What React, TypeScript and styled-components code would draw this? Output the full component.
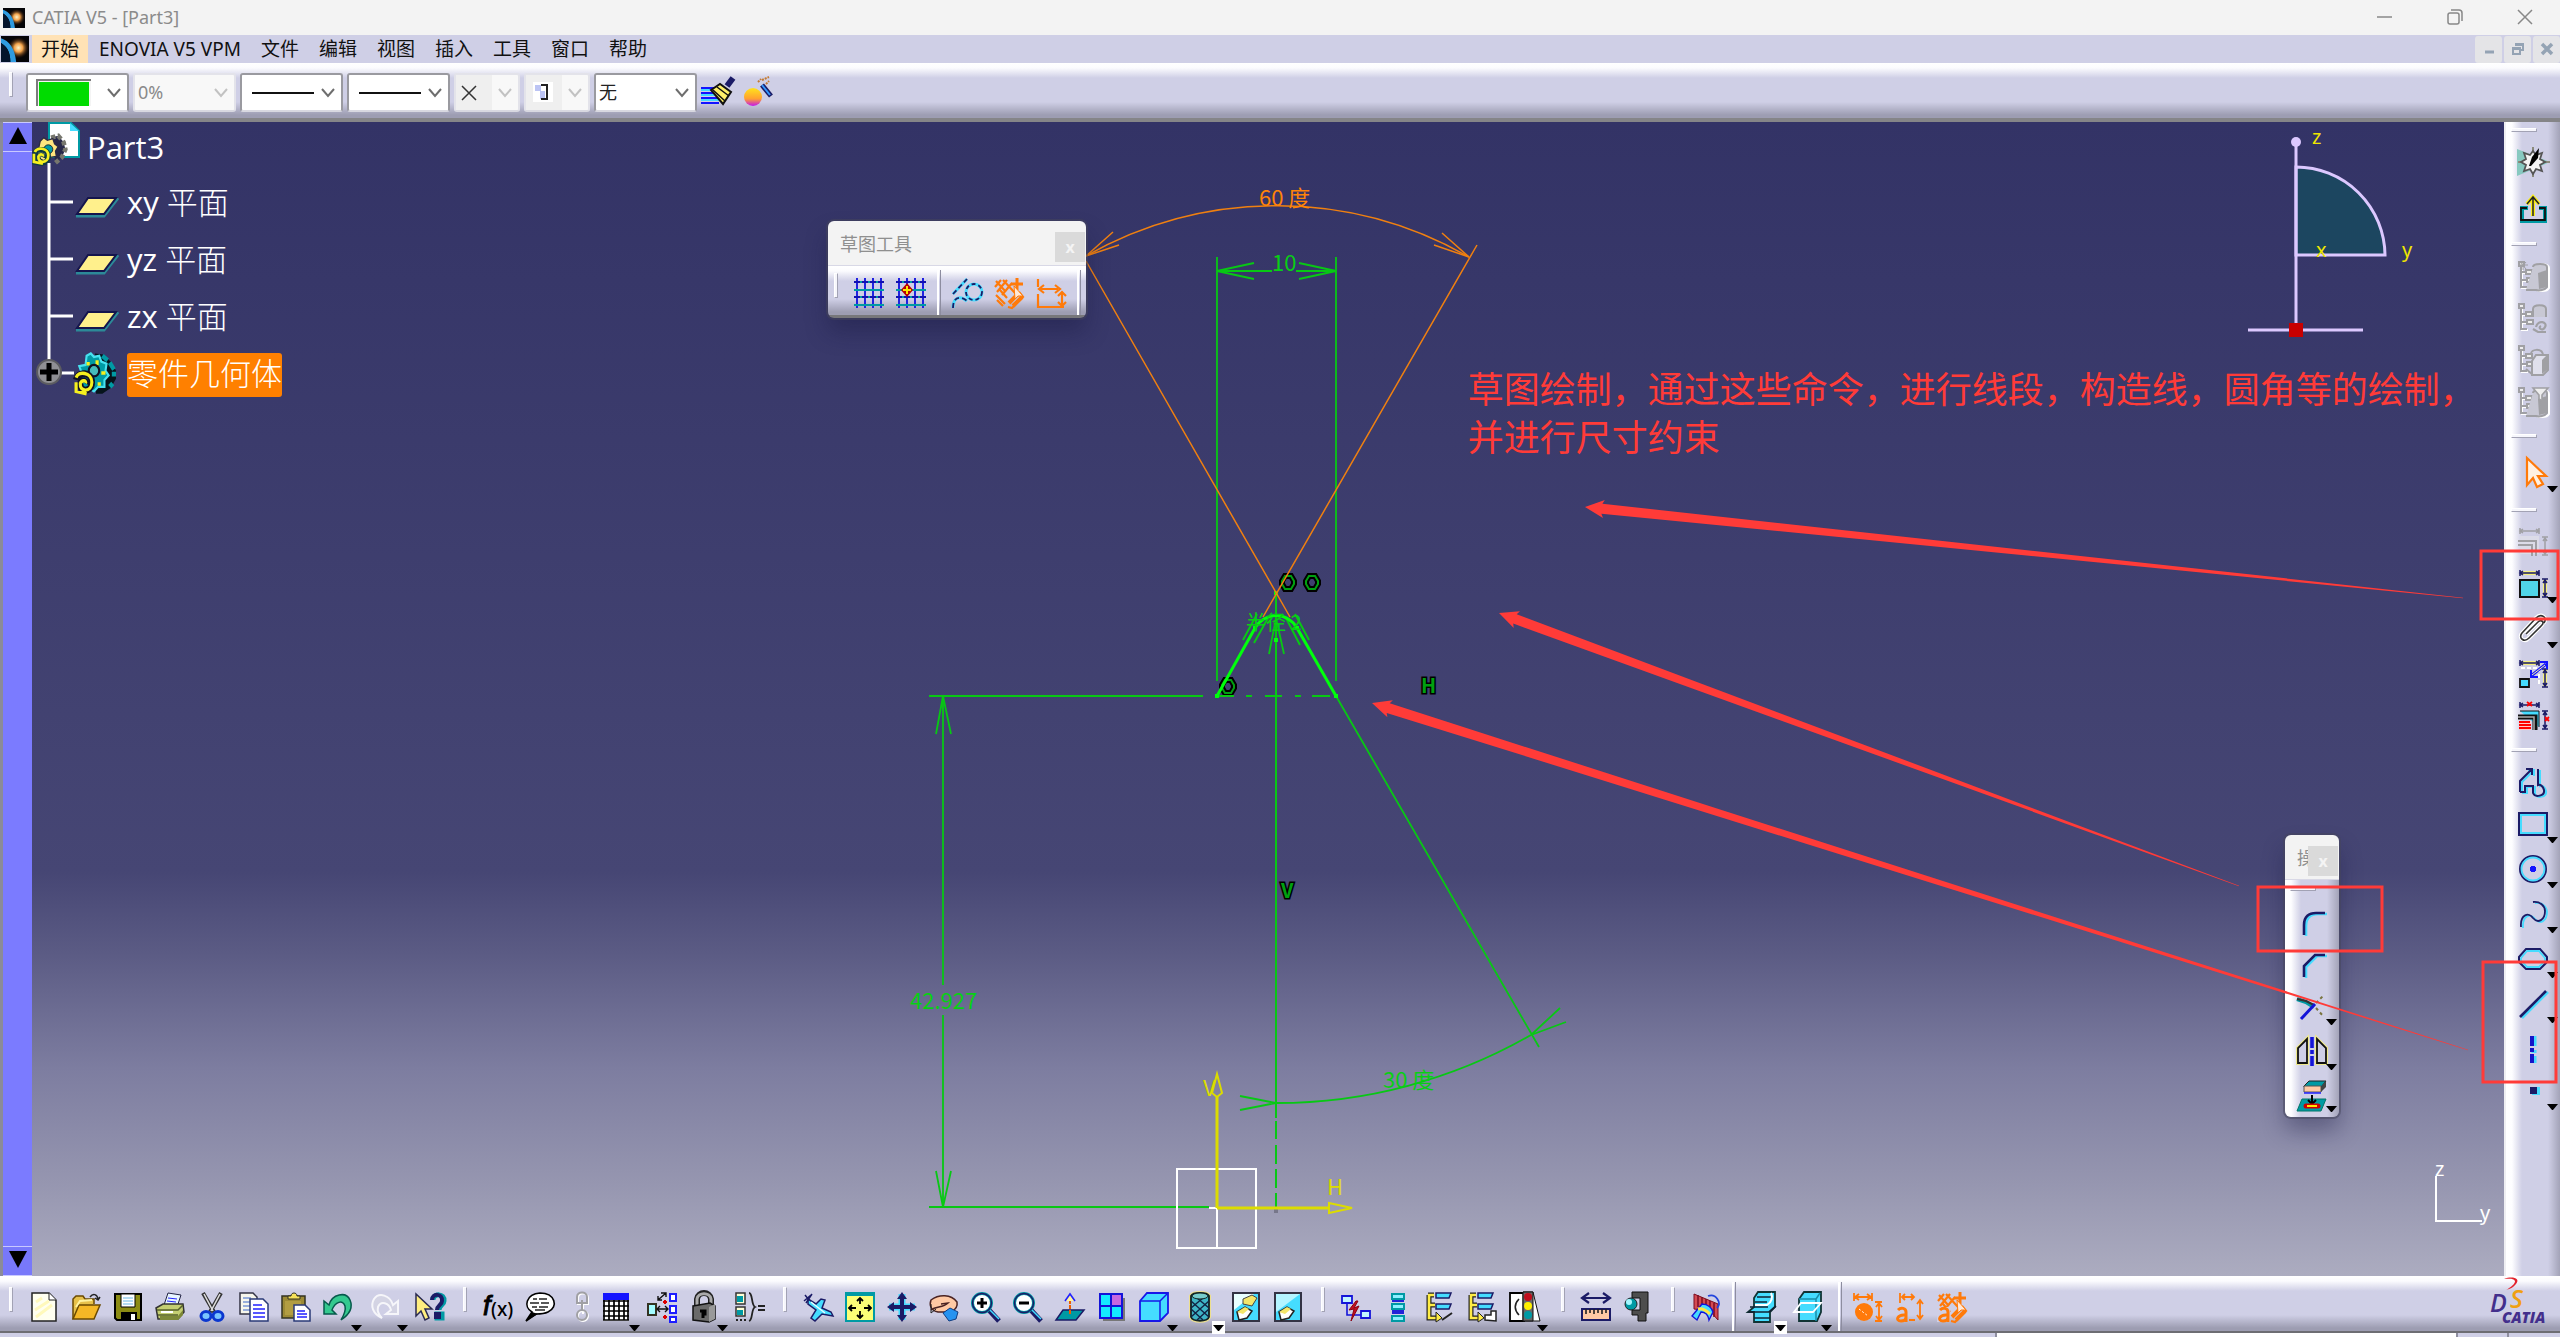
import React from "react";
import styled, { createGlobalStyle, css } from "styled-components";

const UI = `"Noto Sans", "Noto Sans CJK SC", sans-serif`;
const CAD = `"Noto Sans CJK SC", sans-serif`;
const RED = "#ff3b38";
const LAV = "#cfcfe6";

const Global = createGlobalStyle`
  *, *::before, *::after { box-sizing: border-box; }
  body { margin: 0; overflow: hidden; }
  button, select { font-family: inherit; font-size: inherit; color: inherit; }
`;

const barDown = css`
  background: linear-gradient(to bottom, #fff 0, #fbfbfe 5px, ${LAV} 15px, ${LAV} calc(100% - 16px), #9d9db2 calc(100% - 3px), #9d9db2 100%);
`;
const barSide = css`
  background: linear-gradient(to right, #fff 0, #fdfdff 6px, ${LAV} 16px, ${LAV} calc(100% - 12px), #a3a3b8 100%);
`;

const Window = styled.div`
  position: relative;
  display: flex;
  flex-direction: column;
  height: 100vh;
  font-family: ${UI};
  font-size: 18px;
  color: #111;
  background: ${LAV};
`;
const TitleBar = styled.header`
  display: flex;
  align-items: center;
  flex: 0 0 35px;
  padding-left: 3px;
  gap: 7px;
  background: #f3f3f3;
  color: #8b8b8b;
`;
const TitleText = styled.h1`
  flex: 1;
  margin: 0;
  font-size: 18px;
  font-weight: 400;
  line-height: 35px;
`;
const WinButton = styled.button`
  width: 70px;
  height: 32px;
  border: 0;
  padding: 0;
  background: none;
`;
const MenuBar = styled.nav`
  display: flex;
  align-items: center;
  flex: 0 0 28px;
  padding-left: 1px;
  font-size: 19px;
  background: ${LAV};
`;
const MenuList = styled.div`
  display: flex;
  gap: 2px;
  flex: 1;
  margin-left: 3px;
`;
const MenuItem = styled.button<{ $active?: boolean }>`
  height: 28px;
  padding: 0 9px;
  border: 0;
  line-height: 24px;
  white-space: nowrap;
  background: ${(p) => (p.$active ? "#ffe2b5" : "transparent")};
`;
const MdiButtons = styled.div`
  display: flex;
  gap: 2px;
`;
const MdiButton = styled.button`
  width: 27px;
  height: 27px;
  padding: 0;
  border: 0;
  border-radius: 3px;
  background: #e4e4e7;
`;
const Grip = styled.span<{ $vertical?: boolean }>`
  flex: none;
  width: ${(p) => (p.$vertical ? "26px" : "4px")};
  height: ${(p) => (p.$vertical ? "4px" : "25px")};
  border: 1px solid;
  border-color: #fff #a2a2b4 #a2a2b4 #fff;
  background: #f6f6fc;
`;
const PropertyBar = styled.div`
  ${barDown}
  display: flex;
  align-items: center;
  gap: 4px;
  flex: 0 0 59px;
  padding: 4px 0 0 9px;
  border-bottom: 4px solid #858588;
  ${Grip} { margin: 0 9px 16px 0; }
`;
const Combo = styled.label<{ $w: number; $off?: boolean }>`
  position: relative;
  display: flex;
  width: ${(p) => p.$w}px;
  height: 39px;
  border: 2px solid ${(p) => (p.$off ? "#e3e3ea" : "#9a9aa0")};
  border-bottom-color: #d8d8e0;
  border-radius: 3px;
  background: ${(p) => (p.$off ? "#f8f8f8" : "#fff")};
  color: ${(p) => (p.$off ? "#8a8a8a" : "#222")};
`;
const Select = styled.select`
  appearance: none;
  width: 100%;
  border: 0;
  padding: 0 26px 2px 3px;
  background: transparent;
  color: inherit;
  opacity: 1;
`;
const ComboArt = styled.svg`
  position: absolute;
  left: 0;
  top: 0;
  pointer-events: none;
`;
const Caret = styled.svg`
  position: absolute;
  right: 6px;
  top: 13px;
  pointer-events: none;
`;
const Main = styled.main`
  display: flex;
  flex: 1;
  min-height: 0;
`;
const ScrollStrip = styled.div`
  display: flex;
  flex-direction: column;
  justify-content: space-between;
  flex: 0 0 32px;
  border-left: 3px solid #8b8b98;
  background: #7b7bff;
`;
const ScrollButton = styled.button`
  height: 30px;
  padding: 0;
  border: 0;
  border-bottom: 1px solid #c9c9ff;
  border-top: 1px solid #c9c9ff;
  background: #7878fa;
`;
const Viewport = styled.section`
  position: relative;
  flex: 1;
  overflow: hidden;
  background: linear-gradient(to bottom, #333366 0%, #464674 65%, #5b5b84 72%, #7d7da0 82%, #9696b0 92%, #acacc0 100%);
`;
const Drawing = styled.svg`
  position: absolute;
  inset: 0;
  width: 100%;
  height: 100%;
  font-family: ${CAD};
  font-weight: 400;
`;
const Tree = styled.ul`
  position: relative;
  width: max-content;
  margin: 0;
  padding: 0;
  list-style: none;
  font-family: "Open Sans", "Noto Sans CJK SC", sans-serif;
  font-weight: 400;
  font-size: 31px;
  color: #fff;
`;
const TreeRow = styled.li<{ $root?: boolean }>`
  display: flex;
  align-items: center;
  height: ${(p) => (p.$root ? "53px" : "57px")};
`;
const TreeLabel = styled.span<{ $selected?: boolean }>`
  height: 44px;
  line-height: 40px;
  border-radius: 3px;
  background: ${(p) => (p.$selected ? "#ff8000" : "transparent")};
  white-space: nowrap;
`;
const Han = styled.span`
  font-weight: 300;
`;
const Note = styled.p`
  position: absolute;
  left: 58%;
  top: 241px;
  margin: 0;
  padding-left: 2px;
  font-family: ${CAD};
  font-size: 36px;
  line-height: 48px;
  white-space: nowrap;
  color: ${RED};
`;
const Palette = styled.div`
  position: absolute;
  overflow: hidden;
  border-radius: 6px;
  box-shadow: 0 0 0 2px rgba(70, 70, 90, 0.5), 0 14px 22px rgba(20, 20, 60, 0.35);
`;
const SketchPalette = styled(Palette)`
  left: 796px;
  top: 99px;
`;
const OperationPalette = styled(Palette)`
  right: 165px;
  top: 713px;
  width: 54px;
`;
const PaletteTitle = styled.div`
  display: flex;
  justify-content: space-between;
  height: 45px;
  padding: 11px 1px 0 12px;
  line-height: 24px;
  background: #f3f3f3;
  border-bottom: 1px solid #d8d8e6;
  color: #8f8f8f;
  white-space: nowrap;
`;
const PaletteName = styled.span`
  flex: 1;
  min-width: 0;
  overflow: hidden;
`;
const CloseButton = styled.button`
  flex: none;
  width: 30px;
  height: 30px;
  padding: 0;
  border: 0;
  background: #dadada;
  color: #f4f4f4;
  font-weight: 700;
  font-size: 16px;
  line-height: 28px;
`;
const VBar = styled.div`
  ${barSide}
  display: flex;
  flex-direction: column;
`;
const SideBar = styled(VBar)`
  flex: 0 0 56px;
  border-left: 2px solid #eeeef2;
`;
const Group = styled.div<{ $vertical?: boolean; $first?: boolean }>`
  display: flex;
  flex: none;
  flex-direction: ${(p) => (p.$vertical ? "column" : "row")};
  align-items: ${(p) => (p.$vertical ? "stretch" : "center")};
  ${(p) =>
    p.$vertical
      ? css`
          padding-top: ${p.$first ? 6 : 11}px;
          ${Grip} { margin: 0 0 9px 5px; }
        `
      : css`
          padding-left: ${p.$first ? 9 : 12}px;
          ${Grip} { margin: 0 10px 14px 0; }
        `}
`;
const HBar = styled.div`
  ${barDown}
  display: flex;
  align-items: center;
  height: 52px;
  padding-top: 4px;
  border-bottom: 3px solid #77777a;
  ${Group} { padding-left: 6px; }
`;
const OperationTools = styled(VBar)`
  ${Group} { padding-top: 7px; }
  ${Grip} { margin-bottom: 11px; }
`;
const Divider = styled.span`
  align-self: stretch;
  flex: none;
  width: 4px;
  margin: 0 5px;
  border-left: 2px solid #fff;
  border-right: 1px solid #8d8da0;
`;
const Tool = styled.button<{ $size: number; $vertical?: boolean }>`
  position: relative;
  display: flex;
  flex: none;
  padding: 0;
  border: 0;
  background: none;
  ${(p) =>
    p.$vertical
      ? css`
          height: ${p.$size}px;
          width: 54px;
          padding-top: ${p.$size === 50 ? 10 : 6}px;
          justify-content: center;
        `
      : css`
          width: ${p.$size}px;
          height: 42px;
          padding-left: 6px;
          align-items: center;
        `}
`;
const DropMark = styled.svg<{ $vertical?: boolean }>`
  position: absolute;
  right: ${(p) => (p.$vertical ? "1px" : "0")};
  bottom: ${(p) => (p.$vertical ? "2px" : "-6px")};
`;
const BottomBar = styled.footer`
  ${barDown}
  display: flex;
  align-items: center;
  flex: 0 0 57px;
  padding-top: 6px;
  border-bottom: 2px solid #6d6d73;
`;
const Logo = styled.svg`
  margin: -12px 8px 0 auto;
  flex: none;
`;
const StatusBar = styled.div`
  display: flex;
  flex: 0 0 4px;
  background: ${LAV};
`;
const StatusField = styled.span<{ $w: string; $white?: boolean }>`
  width: ${(p) => p.$w};
  border-right: 2px solid #8f8fa0;
  background: ${(p) => (p.$white ? "#fff" : "transparent")};
`;
const Markup = styled.svg`
  position: absolute;
  inset: 0;
  width: 100%;
  height: 100%;
  pointer-events: none;
`;

const N = "#1b1b66";
const C = "#45dcff";
const T = "#009aa4";
const O = "#ff7a0a";
const G = "#a0a0a4";

const duo = (d: string, w = 2) => (
  <g fill="none">
    <path d={d} stroke={C} strokeWidth={w} transform="translate(2 1)" />
    <path d={d} stroke={N} strokeWidth={w} />
  </g>
);
const specTree = (
  <g fill="none" stroke="#fff" strokeWidth="2">
    <path d="M4 5v22h6M4 12h6M4 20h6" />
    <path d="M3 4v22h6M3 11h6M3 19h6" stroke={G} strokeWidth="2" />
    <path d="M1 1h5v4H1zM8 9h6v4H8zM9 17h6v4H9z" fill="#eee" stroke={G} strokeWidth="2" />
  </g>
);
const grayCyl = (
  <g>
    <path d="M17 7c0-5 14-5 14 0v20c-2 4-12 4-14 0z" fill={LAV} stroke="#fff" strokeWidth="2" />
    <path d="M15 6c0-4 14-4 14 0v20c-2 3-8 4-11 3H8" fill="#c8c8d4" stroke={G} strokeWidth="2" />
    <path d="M20 12l9-3v17l-8 2z" fill={G} />
  </g>
);
const dims = (c: string) => (
  <g stroke={c} strokeWidth="1.5" fill="none">
    <path d="M2 1v6M21 1v6M3 4h17M5 2l-3 2 3 2M18 2l3 2-3 2" />
    <path d="M24 10h6M24 28h6M27 11v16M25 14l2-3 2 3M25 24l2 3 2-3" />
  </g>
);
const dimGlow = (
  <g stroke="#f4ee7c" strokeWidth="4" fill="none">
    <path d="M3 4h17M27 11v16" />
  </g>
);
const pencilHatch = (
  <g stroke={O} strokeWidth="2.2" fill="none">
    <path d="M1 9l6-7M3 14L13 2M8 17L18 5M2 3l10 11M9 2l12 13M2 17l9 9M3 22l6 6M13 20l-7-8M25 14l4 5-11 11-4-1" />
    <path d="M23 0v12M17 6h12" strokeWidth="3" />
    <path d="M15 25l9-9M19 28l9-9" strokeWidth="4" />
    <path d="M20 8l1 13 3-3h5z" fill="#ffe8d5" strokeWidth="1" />
  </g>
);
const lens = (minus: boolean) => (
  <g>
    <path d="M17 17l11 12" stroke={N} strokeWidth="5" />
    <path d="M18 17l10 10" stroke={C} strokeWidth="1.5" />
    <circle cx="11" cy="11" r="9.5" fill="#fff" stroke={T} strokeWidth="3" />
    <circle cx="11" cy="11" r="9.5" fill="none" stroke={N} strokeWidth="1.5" />
    <path d={minus ? "M6 11h10" : "M6 11h10M11 6v10"} stroke="#000" strokeWidth="3" />
  </g>
);
const grid = (
  <g fill="none" strokeWidth="2">
    <path d="M3 0v30M11 0v30M19 0v30M27 0v30" stroke="#2222e0" />
    <path d="M0 4h30M0 12h30M0 19h30M0 27h30" stroke={T} />
    <path d="M0 4h6M8 4h6M16 4h6M24 4h6M0 19h6M8 19h6M16 19h6M24 19h6" stroke="#1212b0" />
  </g>
);
const orangeLetter = (
  <g fill="none" stroke={O} strokeWidth="3">
    <path d="M3 18c3-3 8-2 8 2v10M11 23c-9-1-11 6-5 6 3 0 5-2 5-4" />
  </g>
);

const art: Record<string, React.ReactNode> = {
  newDoc: <><path d="M3 1h17l7 7v21H3z" fill="#fffff0" stroke="#222" strokeWidth="1.5" /><path d="M20 1v7h7" fill="#fff" stroke="#222" /><path d="M7 10l6-4M6 18l14-9M7 25l16-12" stroke="#fff9bc" strokeWidth="3" /></>,
  open: <><path d="M2 27V7l3-3h7l2 3h9v5" fill="#e7c14a" stroke="#6b4a00" strokeWidth="1.5" /><path d="M2 27l6-14h21l-6 14z" fill="#f5b826" stroke="#6b4a00" strokeWidth="1.5" /><path d="M5 15l4-6 12-1" stroke="#fff3a0" strokeWidth="2" fill="none" /><path d="M19 5c3-4 7-3 8 2m-3-1l3 2 2-3" fill="none" stroke="#222" strokeWidth="1.5" /></>,
  save: <><path d="M2 2h26v26H4l-2-2z" fill="#8c8c14" stroke="#000" strokeWidth="2" /><path d="M8 2h14v13H8z" fill="#fff" stroke="#000" /><path d="M10 6h10M10 9h10M10 12h10" stroke="#68b8e8" /><path d="M8 20h16v8H8z" fill="#000" /><path d="M18 22h4v6h-4z" fill="#fff" /></>,
  print: <><path d="M9 13L13 1l13 2-4 12z" fill="#e8f5ff" stroke="#224" /><path d="M13 6l9 1M12 9l9 1" stroke="#22f" /><path d="M1 16l7-4h20l1 8-6 7H3z" fill="#c4ce72" stroke="#333" strokeWidth="1.5" /><path d="M2 18h21l5-5M3 23h20" stroke="#55602a" strokeWidth="1.5" fill="none" /><path d="M5 28h18l5-5v-5l-5 6H5z" fill="#7d8838" /><path d="M6 20h12" stroke="#fff" strokeWidth="2" /></>,
  cut: <><path d="M6 1l11 19M24 1L13 20" stroke="#333" strokeWidth="4" /><path d="M7 2l9 17M23 2L14 19" stroke="#ddd" strokeWidth="1.6" /><ellipse cx="9" cy="24" rx="5" ry="4.5" fill="#79c4ff" stroke="#0b37cf" strokeWidth="3" /><ellipse cx="21" cy="24" rx="5" ry="4.5" fill="#79c4ff" stroke="#0b37cf" strokeWidth="3" /></>,
  copy: <><path d="M1 1h13l4 4v17H1z" fill="#f6f6ec" stroke="#334" strokeWidth="1.5" /><path d="M4 6h8M4 10h10M4 14h8M4 18h8" stroke="#3a66c9" /><path d="M11 7h13l5 5v17H11z" fill="#fff" stroke="#2a3a77" strokeWidth="1.5" /><path d="M14 13h9M14 17h12M14 21h12M14 25h12" stroke="#22f" strokeWidth="1.5" /></>,
  paste: <><path d="M1 4h23v22H1z" fill="#9c8a35" stroke="#332" strokeWidth="1.5" /><path d="M7 7V4h3c0-4 6-4 6 0h3v3z" fill="#f5e15a" stroke="#332" /><path d="M4 9h16v14H4z" fill="#b29d42" /><path d="M13 13h11l5 5v11H13z" fill="#fff" stroke="#2a3a77" strokeWidth="1.5" /><path d="M16 19h8M16 22h10M16 25h10" stroke="#22f" strokeWidth="1.5" /></>,
  undo: <path d="M1 9v13h12l-4-4c3-8 11-11 13-4 1 4-1 9-4 14 9-6 12-13 9-20C23-1 9 2 6 13z" fill="#35c98f" stroke="#075a4c" strokeWidth="1.5" />,
  redo: <path d="M29 9v13H17l5-4c-2-7-10-10-13-3-1 4 1 8 4 11C4 22 1 14 5 7c5-7 16-4 19 6z" fill="#d4d4e4" stroke="#f6f6fa" strokeWidth="2" />,
  help: <><path d="M1 2v22l5-5 4 9 4-2-4-9h7z" fill="#ffee80" stroke="#2a2a50" strokeWidth="1.5" /><path d="M18 8c0-7 12-7 11 1 0 4-5 4-5 9M22 22h5v4h-5z" fill="none" stroke={T} strokeWidth="5" /><path d="M17 8c0-7 11-7 10 1 0 4-5 4-5 9M21 22h3v3h-3z" fill="none" stroke={N} strokeWidth="4" /></>,
  fx: <><text x="0" y="23" fontFamily="Liberation Sans" fontStyle="italic" fontSize="27" fontWeight="400" stroke="#000">f</text><text x="8" y="24" fontFamily="Noto Sans" fontSize="19" fontWeight="500">(x)</text></>,
  note: <><path d="M1 29l6-9C-2 15 1 2 15 1c15 0 19 14 8 19-4 2-9 2-12 2z" fill="#fff" stroke="#000" strokeWidth="1.6" /><path d="M1 29l6-9 6 2z" /><path d="M8 7h4m2 0h8M5 11h9m2 0h8M7 15h5m2 0h9M10 18h10" stroke="#222" strokeWidth="1.6" /></>,
  link: <g fill="none" stroke="#fff" strokeWidth="2"><path d="M11 12V6c0-6 10-6 10 0v6zM16 11v11" /><path d="M10 11V5c0-6 10-6 10 0v6zM15 8v12" stroke={G} /><circle cx="16" cy="24" r="5" /><circle cx="15" cy="23" r="5" stroke={G} /></g>,
  table: <><path d="M2 1h26v28H2z" fill="#fff" /><path d="M2 1h26v7H2z" fill="#1414ff" /><path d="M3 8v20M8 8v20M13 8v20M18 8v20M23 8v20M27 8v20M2 9h26M2 14h26M2 19h26M2 24h26M2 28h26" stroke="#000" strokeWidth="1.7" fill="none" /></>,
  relations: <><path d="M1 12h8v11H1z" fill="#a3fcff" stroke="#332" strokeWidth="2" /><path d="M23 2h6v7h-6zM23 14h6v7h-6zM23 25h6v5h-6z" fill="#fff" stroke="#1d1dff" strokeWidth="2" /><path d="M10 17h11M13 14l-3 3 3 3M18 14l3 3-3 3M11 8l8-7M14 1h5v4M11 4v4h4" stroke="#111" strokeWidth="1.4" fill="none" /><path d="M16 10h4M18 8v4M16 25h4M18 23v4" stroke="#d00" strokeWidth="2" /></>,
  lock: <><path d="M8 15V7c1-8 13-8 14 0v6" fill="none" stroke="#222" strokeWidth="6" /><path d="M8 15V7c1-7 13-7 14 0v6" fill="none" stroke="#aaa" strokeWidth="3" /><path d="M4 14l17-3 5 3v13l-6 3-16-2z" fill="#6a6a6a" stroke="#111" strokeWidth="1.5" /><path d="M20 15l6-3v15l-6 3z" fill="#999" /><path d="M11 19h5v3h-2v4" stroke="#000" strokeWidth="3" fill="none" /></>,
  equation: <><path d="M1 1h9v11H1zM1 15h9v9H1z" fill="#ffffd6" stroke="#333" strokeWidth="1.5" /><path d="M2 4h6v6H2zM2 18h6v5H2z" fill={T} /><path d="M14 1c4 0 2 12 6 14-4 2-2 13-6 14M23 14h7M23 18h7M1 28h2m2 0h2m2 0h2" fill="none" stroke="#222" strokeWidth="1.8" /></>,
  fly: <><path d="M5 7l8 5 5-5 4 1-3 8 9 4 2 4-11-2-7 7-4-3 5-8-8-6z" fill={C} stroke={N} strokeWidth="1.5" /><path d="M1 9l7-6M2 3l4 5M3 11l6-9" stroke={N} strokeWidth="1.5" /><path d="M8 10l14 11" stroke="#e9ffff" strokeWidth="1.5" /></>,
  fit: <><path d="M1 1h28v28H1z" fill="#fcff77" stroke={T} strokeWidth="2" /><path d="M1 1h28v3H1z" fill={T} /><g stroke="#000" fill="none" strokeWidth="1.8"><path d="M15 6v6M15 19v7M4 16h7M19 16h7M12 9l3-3 3 3M12 23l3 3 3-3M7 13l-3 3 3 3M23 13l3 3-3 3" /></g></>,
  pan: <><path d="M15 2v26M2 15h26" stroke={C} strokeWidth="7" /><path d="M15 0l5 7h-3v6h6v-3l7 5-7 5v-3h-6v6h3l-5 7-5-7h3v-6H7v3l-7-5 7-5v3h6V7h-3z" fill={N} /></>,
  rotate: <><path d="M2 8c8-6 20-6 26 2 1 5-2 8-6 10H9c-7-1-9-7-7-12z" fill="#ffc9a4" stroke="#4a2323" strokeWidth="1.5" /><path d="M2 18c5-4 12-2 17-7l-7 1" fill="none" stroke="#4a2323" strokeWidth="1.5" /><path d="M14 21l7-5 8 4-2 7-7 2z" fill="#2693f0" stroke="#103c80" /><path d="M2 12v9l5-4" fill="none" stroke="#222" /></>,
  zoomIn: lens(false),
  zoomOut: lens(true),
  normal: <><path d="M8 18h21l-8 10H1z" fill={T} stroke={N} strokeWidth="1.5" /><path d="M15 22V5" stroke="#ed5d00" strokeWidth="2" strokeDasharray="4 1" /><path d="M10 9l5-7 5 7" fill="#fff6a0" stroke="#2222ff" strokeWidth="1.6" /></>,
  multi: <><path d="M6 6h22v23H6z" fill="#777" /><path d="M3 2h22v24H3z" fill="#14ecff" stroke="#1414d8" strokeWidth="2" /><path d="M14 2v24M3 14h22" stroke="#1414d8" strokeWidth="2" /><path d="M15 3h9v10h-9z" fill="#c868e0" /></>,
  cube: <><path d="M1 9L8 1h21v20l-8 8H1z" fill={C} stroke="#1717e8" strokeWidth="1.8" /><path d="M1 9h20v20M21 9l8-8" fill="none" stroke="#1717e8" strokeWidth="1.5" /></>,
  cylinder: <><path d="M6 4c2-4 16-4 18 0v21c-2 5-16 5-18 0z" fill={T} stroke="#eddf8f" strokeWidth="4" /><path d="M6 4c2-4 16-4 18 0v21c-2 5-16 5-18 0z" fill="#3fb4c6" stroke="#122" strokeWidth="1.8" /><path d="M6 9l18 16M6 17l12 11M12 6l12 10M24 9L6 25M24 17L12 28M18 6L6 16" fill="none" stroke="#124" strokeWidth="1.4" /><ellipse cx="15" cy="4" rx="8" ry="3" fill="#7cc" stroke="#122" /></>,
  hideShow: <><path d="M2 1h26v28H2z" fill={C} stroke="#334" strokeWidth="2" /><path d="M3 2h20L3 18z" fill="#e8ffff" /><path d="M12 7l9-4 5 3-5 8-9-2z" fill="#f4e66a" stroke="#444" /><path d="M6 20l8-5 7 4-5 7-8 2z" fill="#fff" stroke="#222" strokeWidth="1.5" /><path d="M6 20l8-5 4 2-6 5z" fill="#f4e66a" /></>,
  swap: <><path d="M2 1h26v28H2z" fill={C} stroke="#334" strokeWidth="2" /><path d="M3 2h24L3 20z" fill="#b4f4ff" /><path d="M6 20l8-5 7 4-5 7-8 2z" fill="#fff" stroke="#222" strokeWidth="1.5" /><path d="M6 20l8-5 4 2-6 5z" fill="#f4e66a" /></>,
  axisOff: <><path d="M1 4h10v7H1zM20 19h9v7h-9z" fill="#c2f5ff" stroke="#1414d8" strokeWidth="1.8" /><path d="M6 11v12h14" fill="none" stroke="#1414d8" strokeWidth="1.6" /><path d="M15 9L8 18l5-1-3 12 8-15-5 2 4-7z" fill="#c10e20" stroke="#8b0010" /></>,
  tree1: <g fill="#8cf0ff" stroke={T} strokeWidth="2"><path d="M9 2h12v5H9zM9 12h12v5H9zM9 24h12v5H9z" /><path d="M9 9h12M9 19h12M9 21h12" stroke="#2323d8" /></g>,
  tree2: <><path d="M3 3h6M4 3v23h10M4 13h6" stroke="#222" strokeWidth="5" fill="none" /><path d="M3 3h6M4 3v23h8M4 13h6" stroke="#ffed45" strokeWidth="2.6" fill="none" /><path d="M11 1h15l-2 5H11zM11 12h15l-2 5H11z" fill={C} stroke={N} strokeWidth="1.5" /><path d="M11 20l6 6-6 4z" fill="#ffed45" stroke="#222" /><path d="M17 28l10-7" stroke="#222" strokeWidth="2" /></>,
  tree3: <><path d="M3 3h6M4 3v23h10M4 13h6" stroke="#222" strokeWidth="5" fill="none" /><path d="M3 3h6M4 3v23h8M4 13h6" stroke="#ffed45" strokeWidth="2.6" fill="none" /><path d="M11 1h15l-2 5H11zM11 12h15l-2 5H11z" fill={C} stroke={N} strokeWidth="1.5" /><path d="M11 20l6 6-6 4z" fill="#ffed45" stroke="#222" /><path d="M18 28v-5h6v-4h5v10z" fill="#fff" stroke="#222" strokeWidth="1.5" /></>,
  signal: <><path d="M1 1h14v28H1z" fill="#fff" stroke="#000" strokeWidth="1.8" /><path d="M10 7c-5 5-5 11 0 16" fill="none" stroke="#222" strokeWidth="1.6" /><path d="M14 0h10l7 29H14z" fill="#fff" stroke="#111" /><path d="M14 0h10v29H14z" fill="#6a6a6a" stroke="#111" /><circle cx="19" cy="5" r="4" fill="#c00d1d" /><circle cx="19" cy="14" r="4" fill="#fff000" /><circle cx="19" cy="23" r="4" fill={T} /></>,
  measure: <><path d="M2 6h26M8 1L1 6l7 5M22 1l7 5-7 5" stroke={N} strokeWidth="2.2" fill="none" /><path d="M1 17h28v11H1z" fill="#ffc9a4" stroke={N} strokeWidth="2" /><path d="M5 17v5M9 17v4M13 17v5M17 17v4M21 17v5M25 17v4" stroke="#222" strokeWidth="1.6" /></>,
  calliper: <><path d="M9 0h16v21h-2v8h-8v-6H9v-5h8V6H9z" fill="#4d4d4d" stroke="#111" /><circle cx="8" cy="12" r="6" fill={T} stroke="#222" /><circle cx="6" cy="10" r="3" fill="#a5f8ff" /></>,
  draft: <><path d="M3 2l24 10v16l-8-9L3 17z" fill="#d44b52" stroke="#7c0c20" /><path d="M7 3v12M11 5v12M15 7v13M19 9v12M23 11v14" stroke="#7c0c20" strokeWidth="1.5" /><path d="M17 4c8-3 14 7 9 12" fill="none" stroke="#24d" strokeWidth="1.8" /><path d="M1 24L11 12c6 0 10 4 11 8l-4 8c-1-6-4-8-8-8l-4 8z" fill={C} stroke="#1414d8" strokeWidth="1.4" /><path d="M7 17c5-1 9 2 12 5" fill="none" stroke="#ffe545" strokeWidth="3" /></>,
  section: <><path d="M7 6l4-6h17v15l-5 5v10H7V20H1l6-5z" fill={C} stroke="#133" strokeWidth="1.8" /><path d="M3 15h18M1 20h21l7-6M10 5h14M8 10h12M7 26h16" stroke="#123" strokeWidth="1.7" fill="none" /><path d="M8 13h12c5-3 6-8 4-12" stroke="#fff" strokeWidth="2" fill="none" /></>,
  block: <><path d="M6 7l5-7h17v20l-4 9H6z" fill={C} stroke="#133" strokeWidth="1.8" /><path d="M6 7h17v22M23 7l4-6" fill="none" stroke="#1a8da8" strokeWidth="1.5" /><path d="M1 20h19l8-9H8z" fill="none" stroke="#fff" strokeWidth="1.8" /></>,
  oDiam: <><circle cx="11" cy="20" r="9" fill={O} /><path d="M1 1v8M19 1v8M3 5h14M6 2L2 5l4 3M14 2l4 3-4 3M22 10h7M22 29h7M26 11v17M23 15l3-4 3 4M23 24l3 4 3-4" fill="none" stroke={O} strokeWidth="1.8" /><path d="M6 17l9 7" stroke="#fff" strokeDasharray="2 2" /></>,
  oText: <>{orangeLetter}<path d="M5 1v10M7 5h12M10 2L7 5l3 3M16 2l3 3-3 3M14 28h6M25 8v19M22 12l3-4 3 4M22 23l3 4 3-4" fill="none" stroke={O} strokeWidth="1.8" /></>,
  oHatch: <>{pencilHatch}<path d="M0 15h13v15H0z" fill={LAV} />{orangeLetter}</>,
  grid,
  snap: <>{grid}<path d="M11 5l6 7-6 7-6-7z" fill="#b80000" /><path d="M11 8v8M7 12h8" stroke="#ffe700" strokeWidth="2" /></>,
  construct: <g fill="none" stroke={C} strokeWidth="3"><circle cx="22" cy="14" r="8" /><circle cx="22" cy="14" r="8" stroke={N} strokeWidth="1.8" strokeDasharray="4 3" /><path d="M1 16L15 1M1 30c0-12 8-12 14-7" /><path d="M1 16L15 1M1 30c0-12 8-12 14-7" stroke={N} strokeWidth="1.8" strokeDasharray="5 3" /></g>,
  geoCon: pencilHatch,
  dimCon: <path d="M2 1v8M2 16v13h26M4 11h18M8 7l-5 4 5 4M19 7l5 4-5 4M26 15v13M22 18l4-4 4 4M22 24l4 4 4-4" fill="none" stroke={O} strokeWidth="2.2" />,
  sketcher: <><path d="M-1 2l33 13-33 14z" fill="#87c9c0" /><path d="M15 0v30M0 15h32" stroke="#8b8b7c" strokeWidth="2" /><path d="M15 4l3 4 6-2-2 6 5 3-5 3 2 6-6-2-3 5-3-5-6 2 2-6-5-3 5-3-2-6 6 2z" fill="#f4f4f4" stroke="#555" strokeWidth="1.8" /><path d="M11 19l3-9 7-9-1 10-7 8z" /></>,
  exit: <><path d="M10 13H4v13h23V13h-6" fill="none" stroke={T} strokeWidth="4" /><path d="M9 13H3v12h24V13h-6" fill="none" stroke="#111" strokeWidth="1.8" /><path d="M15 21V3M9 9l6-7 6 7" fill="none" stroke="#f8ed18" strokeWidth="4" /><path d="M15 21V3M9 9l6-7 6 7" fill="none" stroke="#222" strokeWidth="1.5" /></>,
  gray1: <>{specTree}<path d="M5 0v9M0 4h10M2 1l6 7M8 1L2 8" stroke={G} />{grayCyl}</>,
  gray2: <>{specTree}<path d="M15 14V6c0-5 13-5 13 0v8" fill="#c8c8d4" stroke={G} strokeWidth="2" /><path d="M18 24c2-8 12-5 9 0-2 5-8 1-4-1M15 26l5 3h8" fill="none" stroke={G} strokeWidth="2.2" /></>,
  gray3: <>{specTree}<path d="M14 16l4-6h12v15l-5 5H14z" fill="#e0e0ec" stroke={G} strokeWidth="2" /><path d="M24 15l5-5v15l-5 4z" fill={G} /><path d="M13 9c0-5 10-6 12 0M8 24l7 6" fill="none" stroke={G} strokeWidth="2" /></>,
  gray4: <>{specTree}{grayCyl}<path d="M15 1h15l-6 7v6l-3-2V8z" fill="#eee" stroke={G} strokeWidth="1.6" /></>,
  select: <path d="M9 1v27l6-7 4 9 6-3-5-8h8z" fill="#fff1e2" stroke={O} strokeWidth="2.2" />,
  conOff: <><path d="M2 9h19v18H2z" fill="#dcdce8" />{dims(G)}<path d="M0 14h18v15M0 18h14v11" stroke={G} strokeWidth="2" fill="none" /></>,
  constraint: <>{dimGlow}<path d="M2 11h19v17H2z" fill="#50d5e8" stroke="#111" strokeWidth="2" />{dims(N)}</>,
  clip: <g fill="none" strokeWidth="4" stroke="#fff"><path d="M8 20L20 8c3-3 7 0 4 3L11 24c-5 5-11 0-7-5L18 4c5-5 12-1 8 5" /><path d="M8 20L20 8c3-3 7 0 4 3L11 24c-5 5-11 0-7-5L18 4c5-5 12-1 8 5" stroke="#333" strokeWidth="1.6" /></g>,
  animate: <>{dimGlow}{dims(N)}<path d="M3 9h18v18" fill="none" stroke="#fff" strokeWidth="2" strokeDasharray="4 2" /><path d="M2 20h9v8H2z" fill={C} stroke="#111" strokeWidth="1.8" /><path d="M13 17L28 5" stroke="#1414ff" strokeWidth="3" /><path d="M14 16L27 6" stroke="#ff9" strokeWidth="1" /><path d="M13 11v7h7M22 3h7v7" fill="none" stroke="#1414ff" strokeWidth="2" /></>,
  edit: <><path d="M2 10h19v16" fill={C} stroke="#111" />{dims(N)}<path d="M0 16h17v13" fill="none" stroke="#111" strokeWidth="5" /><path d="M0 16h16v13" fill="none" stroke="#aaa" strokeWidth="1.5" /><path d="M1 20h12v9H1z" fill="#ffc9c9" /><path d="M1 21h11M1 24h12M1 27h12" stroke="#f00" strokeWidth="1.8" /><path d="M9 1l5 4M14 1L9 5M27 16l4 4M31 16l-4 4" stroke="#f00" strokeWidth="1.8" /></>,
  profile: duo("M2 25V14L13 3M8 2h6v6M2 25h5v-6h8v7c2 5 12 3 11-3-1-4-4-6-6-5V2"),
  rect: <><path d="M1 4h28v22H1z" fill="none" stroke={N} strokeWidth="2" /><path d="M3 6h24v18H3z" fill="none" stroke={C} strokeWidth="2" /></>,
  circle: <><circle cx="15" cy="15" r="13" fill="none" stroke={N} strokeWidth="2" /><circle cx="15" cy="15" r="11.5" fill="none" stroke={C} strokeWidth="1.8" /><path d="M12 15h6M15 12v6" stroke="#1414ff" strokeWidth="4" /></>,
  spline: duo("M3 28C2 15 11 13 15 19c5 6 12 2 12-7 0-5-5-10-12-9", 1.8),
  ellipse: <><path d="M1 13l7-8h14l7 8v5l-7 7H8l-7-7z" fill="none" stroke={N} strokeWidth="2" /><path d="M3 14l6-7h12l6 7v3l-6 6H9l-6-6z" fill="none" stroke={C} strokeWidth="1.8" /></>,
  line: duo("M2 28L28 2", 2.6),
  axis: <><path d="M16 2v10M16 16v3M16 22v7" stroke={C} strokeWidth="5" /><path d="M14 2v10M14 14v4M14 20v9" stroke="#1414c8" strokeWidth="4" /></>,
  point: <><path d="M14 11h8v8h-8z" fill={C} /><path d="M12 11h7v7h-7z" fill={N} /></>,
  corner: duo("M7 27V17C7 8 12 5 19 5h9", 2.6),
  chamfer: duo("M7 27V16L18 5h10", 2.6),
  trim: <><path d="M0 8l9 3 8 5" stroke={T} strokeWidth="4" fill="none" /><path d="M0 8l9 2 8 4" stroke="#333" strokeWidth="2" fill="none" /><path d="M4 28l14-15" stroke="#1414d8" strokeWidth="3" /><path d="M19 12l8-8M19 17l8 9" stroke="#7a7540" strokeWidth="2" strokeDasharray="3 3" /></>,
  mirror: <><path d="M1 27V12l9-9v24zM29 27V12l-9-9v24z" fill={LAV} stroke="#eee88c" strokeWidth="4" /><path d="M1 27V12l9-9v24zM29 27V12l-9-9v24z" fill={LAV} stroke="#111" strokeWidth="1.8" /><path d="M15 1v11M15 14v4M15 20v10" stroke="#1414d8" strokeWidth="3.6" /></>,
  project: <><path d="M7 5l5-5h17l-5 6H7z" fill={T} stroke="#222" /><path d="M7 5h17v6H7z" fill="#ffc9a4" stroke="#555" /><path d="M24 6l5-6v6l-5 5z" fill="#444" /><path d="M7 12h17" stroke="#22f" strokeWidth="1.5" /><path d="M5 18h24l-5 12H0z" fill={T} stroke="#076" /><path d="M15 14v9M11 19l4 4 4-4" stroke="#000" strokeWidth="2" fill="none" /><path d="M9 25h12" stroke="#c00" strokeWidth="5" strokeLinecap="round" /><path d="M10 25h10" stroke="#ffe600" strokeWidth="2" /></>,
};

type Item = [icon: string, label: string, drop?: 0 | 1 | 2, size?: number];

function Tools({ items, vertical, first, grip = true }: { items: Item[]; vertical?: boolean; first?: boolean; grip?: boolean }) {
  const buttons = items.map(([icon, label, drop, size]) => (
    <Tool key={icon} type="button" aria-label={label} $vertical={vertical} $size={size ?? (drop ? (vertical ? 45 : 46) : 42)}>
      <svg width="30" height="30" viewBox="0 0 30 30" overflow="visible">{art[icon]}</svg>
      {drop ? (
        <DropMark $vertical={vertical} width="13" height="13" viewBox="0 0 13 13">
          {drop === 2 && <path d="M0 0h13v13H0z" fill="#fff" />}
          <path d="M1 4h11l-5 6h-1z" />
        </DropMark>
      ) : null}
    </Tool>
  ));
  if (!grip) return <>{buttons}</>;
  return (
    <Group $vertical={vertical} $first={first}>
      <Grip $vertical={vertical} />
      {buttons}
    </Group>
  );
}

function AppIcon({ size }: { size: number }) {
  return (
    <svg width={size} height={size - 2} viewBox="0 0 24 22" preserveAspectRatio="none">
      <defs>
        <radialGradient id="glow">
          <stop offset="0" stopColor="#fff3c8" />
          <stop offset="0.4" stopColor="#f2a24a" />
          <stop offset="1" stopColor="#3a1604" stopOpacity="0" />
        </radialGradient>
      </defs>
      <path d="M0 0h24v22H0z" fill="#050508" />
      <ellipse cx="15" cy="10" rx="9" ry="9" fill="url(#glow)" />
      <path d="M0 2c7 2 12 9 13 20H8C8 13 5 9 0 6z" fill="#2f9be0" />
      <path d="M0 6c5 3 8 8 8 16H0z" fill="#04142c" />
    </svg>
  );
}

function Chevron({ off }: { off?: boolean }) {
  return (
    <Caret width="14" height="10" viewBox="0 0 14 10">
      <path d="M1 1l6 7 6-7" fill="none" stroke={off ? "#c2c2c2" : "#6e6e6e"} strokeWidth="2" />
    </Caret>
  );
}

function Property({ w, name, value = "", off, children }: { w: number; name: string; value?: string; off?: boolean; children?: React.ReactNode }) {
  return (
    <Combo $w={w} $off={off}>
      <Select aria-label={name} disabled={off}>
        <option>{value}</option>
      </Select>
      {children && <ComboArt width={w - 4} height="35">{children}</ComboArt>}
      <Chevron off={off} />
    </Combo>
  );
}

const gear = (
  <g>
    <path d="M20 3l8 1 8 7 4 7v7l-5 8-8 5h-6z" fill="#06141c" />
    <path d="M27 5l5 4M34 11l4 6M36 21h4M34 29l3 3" stroke={T} strokeWidth="4" />
    <path d="M12 5l4-2 3 3 5-1 2 5 5 2-1 6 3 4-4 4v6l-6 0-4 4-5-3-6 1-1-6-4-4 4-5-2-5 6-1z" fill={T} stroke="#46e2f0" strokeWidth="2" />
    <path d="M12 12h3M22 9v4M26 20h4M24 28v3" stroke="#f6f01e" strokeWidth="3" />
    <circle cx="19" cy="18" r="5" fill="#4bb" stroke="#112" strokeWidth="2" />
    <path d="M2 26c2-8 15-7 15 2 0 9-12 9-11 1 2-4 6-2 5 0" fill="none" stroke="#112" strokeWidth="6" />
    <path d="M2 24c2-6 15-5 15 4 0 9-12 9-11 1 2-4 6-2 5 0M2 28v8l10 2" fill="none" stroke="#f6f01e" strokeWidth="3" />
  </g>
);

function PlaneRow({ axes }: { axes: string }) {
  return (
    <TreeRow>
      <svg width="95" height="57" viewBox="0 0 95 57">
        <path d="M17 0v57M17 27h24" stroke="#fff" strokeWidth="3" fill="none" />
        <path d="M44 41h28l14-18" fill="none" stroke="#2c8a98" strokeWidth="3" />
        <path d="M56 23h28L72 39H45z" fill="#fff08c" stroke="#15154d" strokeWidth="2" />
      </svg>
      <TreeLabel>{axes} <Han>平面</Han></TreeLabel>
    </TreeRow>
  );
}

function SpecificationTree() {
  return (
    <Tree>
      <TreeRow $root>
        <svg width="55" height="53" viewBox="0 0 55 53">
          <path d="M17 1h22l8 8v26H17z" fill="#fff" stroke={T} strokeWidth="2" />
          <path d="M38 1v8h9z" fill={C} />
          <g transform="translate(1 12) scale(0.9)">
            <path d="M20 4l8-2 6 7 2 8-4 9-7 6" fill="#28284a" stroke="#77776e" strokeWidth="5" strokeDasharray="5 3" />
            <path d="M8 8l4-4 4 3 6-2 2 6 4 3-3 5 1 6-7 1-4 5-7-3-5-6 3-5z" fill="#ffe57e" stroke="#2b2b44" strokeWidth="1.5" />
            <circle cx="17" cy="17" r="5" fill={T} stroke="#222" />
            <path d="M2 22c2-7 15-6 15 3 0 9-12 9-11 1 2-4 6-2 5 0M1 22v9l10 2" fill="none" stroke="#103c44" strokeWidth="6" />
            <path d="M2 20c2-6 15-5 15 4 0 9-12 9-11 1 2-4 6-2 5 0M1 22v9l10 2" fill="none" stroke="#f6f01e" strokeWidth="3" />
          </g>
          <path d="M17 41v12" stroke="#fff" strokeWidth="3" />
        </svg>
        <TreeLabel>Part3</TreeLabel>
      </TreeRow>
      <PlaneRow axes="xy" />
      <PlaneRow axes="yz" />
      <PlaneRow axes="zx" />
      <TreeRow>
        <svg width="95" height="57" viewBox="0 0 95 57">
          <path d="M17 0v24M24 27h18" stroke="#fff" strokeWidth="3" fill="none" />
          <circle cx="17" cy="26" r="12" fill="#8f8f93" stroke="#5c5c60" strokeWidth="2" />
          <path d="M17 17v18M8 26h18" stroke="#000" strokeWidth="5" />
          <g transform="translate(42 4) scale(1.05 1.15)">{gear}</g>
        </svg>
        <TreeLabel $selected><Han>零件几何体</Han></TreeLabel>
      </TreeRow>
    </Tree>
  );
}

function Coincidence({ x, y }: { x: number; y: number }) {
  return (
    <g fill="none">
      <path d={`M${x - 3} ${y - 6}h6l3 5v3l-3 5h-6l-3-5v-3z`} stroke="#000" strokeWidth="6" />
      <path d={`M${x - 3} ${y - 6}h6l3 5v3l-3 5h-6l-3-5v-3z`} stroke="#00a010" strokeWidth="2" />
    </g>
  );
}

function Sketch() {
  return (
    <Drawing viewBox="32 122 2472 1154" role="img" aria-label="Part3 草图">
      <Coincidence x={1288} y={582} />
      <Coincidence x={1312} y={582} />
      <Coincidence x={1228} y={686} />
      <g fill="none" stroke="#08c814" strokeWidth="1.8">
        <path d="M1217 257V681M1336 257V681M1217 271H1272M1296 271H1336" />
        <path d="M1254 263L1217 271L1254 279M1299 263L1336 271L1299 279" />
        <path d="M929 696H1203M943 696V985M943 1015V1207M929 1207H1209" />
        <path d="M936 734L943 696L951 734M936 1171L943 1207L951 1171" />
        <path d="M1217 696h17M1246 696h6M1265 696h17M1295 696h6M1312 696h18" />
        <path d="M1336 696L1539 1047M1560 1008L1531 1035L1566 1022" />
        <path d="M1240 1096L1276 1103L1240 1110M1276 1103A510 510 0 0 0 1531 1035" />
        <path d="M1243 640L1257 614M1254 643L1268 618M1309 640L1295 614M1300 645L1286 618" strokeWidth="2" />
        <path d="M1269 654L1276 618L1284 654" />
        <path d="M1276 593V1118M1276 1121v18M1276 1145v19M1276 1169v19M1276 1193v16" strokeWidth="2" />
      </g>
      <path d="M1217 696L1255 628A24 24 0 0 1 1297 628L1336 696" fill="none" stroke="#00ff0c" strokeWidth="3" />
      <path d="M1215 694h4v4h-4zM1334 694h4v4h-4zM1274 591h4v4h-4zM1274 638h4v4h-4zM1253 626h4v4h-4zM1295 626h4v4h-4z" fill="#00ff0c" />
      <path d="M1274 1209h4v4h-4z" fill="#77778a" />
      <g fill="#08d014" fontSize="22">
        <text x="1272" y="271">10</text>
        <text x="910" y="1009">42.927</text>
        <text x="1383" y="1088">30 度</text>
        <text x="1246" y="630" fontSize="20">半径 2</text>
      </g>
      <g fill="none" stroke="#f08010" strokeWidth="1.5">
        <path d="M1086 256A387 387 0 0 1 1469 257" />
        <path d="M1113 232L1086 256L1119 245M1442 233L1469 257L1434 245" />
        <path d="M1086 261L1290 617M1477 245L1263 617" />
      </g>
      <text x="1259" y="206" fontSize="22" fill="#ff8408">60 度</text>
      <g fontSize="20" fontWeight="700" fill="#00a010" stroke="#000" strokeWidth="3" paintOrder="stroke">
        <text x="1421" y="693">H</text>
        <text x="1281" y="898">V</text>
      </g>
      <path d="M1177 1169H1256V1248H1177zM1217 1208V1248M1209 1208H1217" fill="none" stroke="#fff" strokeWidth="2" />
      <g fill="none" stroke="#dcdc00" strokeWidth="3">
        <path d="M1217 1208V1097M1217 1208H1328" />
        <path d="M1217 1074L1212 1093L1217 1097L1222 1093zM1352 1208L1329 1203V1213z" strokeWidth="2" />
      </g>
      <g fill="#dcdc00" fontSize="22">
        <text x="1203" y="1096">V</text>
        <text x="1327" y="1195">H</text>
      </g>

      <path d="M2296 167A89 89 0 0 1 2385 255H2296z" fill="#1c4660" stroke="#dcc8ff" strokeWidth="3" />
      <path d="M2296 142V323M2248 330H2363" stroke="#dcc8ff" strokeWidth="3" />
      <circle cx="2296" cy="142" r="5" fill="#dcc8ff" />
      <path d="M2289 323h14v14h-14z" fill="#c80000" />
      <g fill="#f0e600" fontSize="20" fontFamily="Noto Sans">
        <text x="2312" y="144">z</text>
        <text x="2316" y="257">x</text>
        <text x="2402" y="257">y</text>
      </g>
      <path d="M2436 1176V1221H2482" fill="none" stroke="#fff" strokeWidth="2" />
      <g fill="#fff" fontSize="20" fontFamily="Noto Sans">
        <text x="2435" y="1176">z</text>
        <text x="2480" y="1220">y</text>
      </g>
    </Drawing>
  );
}

function PointerArrow({ tip, tail }: { tip: [number, number]; tail: [number, number] }) {
  const dx = tail[0] - tip[0];
  const dy = tail[1] - tip[1];
  const length = Math.hypot(dx, dy);
  const angle = (Math.atan2(dy, dx) * 180) / Math.PI;
  return (
    <path
      transform={`translate(${tip[0]} ${tip[1]}) rotate(${angle})`}
      d={`M0 0L19 -9L17 -5L${length} -0.3V0.3L17 5L19 9z`}
      fill={RED}
    />
  );
}

export default function App() {
  return (
    <Window>
      <Global />
      <TitleBar>
        <AppIcon size={22} />
        <TitleText>CATIA V5 - [Part3]</TitleText>
        <div>
          <WinButton type="button" aria-label="最小化">
            <svg width="16" height="16"><path d="M0 8h15" stroke="#888" strokeWidth="1.5" /></svg>
          </WinButton>
          <WinButton type="button" aria-label="还原">
            <svg width="16" height="16" fill="none" stroke="#888" strokeWidth="1.5"><rect x="1" y="4" width="11" height="11" rx="2" /><path d="M4 1h8c2 0 3 1 3 3v8" /></svg>
          </WinButton>
          <WinButton type="button" aria-label="关闭">
            <svg width="16" height="16"><path d="M1 1l14 14M15 1L1 15" stroke="#888" strokeWidth="1.5" /></svg>
          </WinButton>
        </div>
      </TitleBar>
      <MenuBar>
        <AppIcon size={28} />
        <MenuList>
          {["开始", "ENOVIA V5 VPM", "文件", "编辑", "视图", "插入", "工具", "窗口", "帮助"].map((m, i) => (
            <MenuItem key={m} type="button" $active={i === 0}>{m}</MenuItem>
          ))}
        </MenuList>
        <MdiButtons>
          <MdiButton type="button" aria-label="最小化文档"><svg width="14" height="14"><path d="M3 10h9" stroke="#94a3b4" strokeWidth="3" /></svg></MdiButton>
          <MdiButton type="button" aria-label="还原文档"><svg width="14" height="14" fill="none" stroke="#94a3b4" strokeWidth="2"><path d="M2 6h7v6H2zM5 4V2h7v6h-2M2 7h7M5 3h7" /></svg></MdiButton>
          <MdiButton type="button" aria-label="关闭文档"><svg width="14" height="14"><path d="M2 2l10 10M12 2L2 12" stroke="#94a3b4" strokeWidth="3.5" /></svg></MdiButton>
        </MdiButtons>
      </MenuBar>
      <PropertyBar>
        <Grip />
        <Property w={103} name="填充颜色">
          <path d="M8 4h55v27H8z" fill="#f4f4f4" /><path d="M9 31V5h54" fill="none" stroke="#7c7c7c" strokeWidth="2" /><path d="M11 7h50v24H11z" fill="#00dc00" />
        </Property>
        <Property w={103} name="透明度" value="0%" off />
        <Property w={103} name="线宽"><path d="M10 18h62" stroke="#111" strokeWidth="2" /></Property>
        <Property w={103} name="线型"><path d="M10 18h62" stroke="#111" strokeWidth="2" /></Property>
        <Property w={66} name="点符号" off>
          <path d="M0 0h36v35H0z" fill="#efefef" /><path d="M6 11l14 14M20 11L6 25" stroke="#333" strokeWidth="1.5" />
        </Property>
        <Property w={66} name="渲染样式" off>
          <path d="M0 0h36v35H0z" fill="#efefef" /><path d="M7 7h20v20H7z" fill="#fff" /><path d="M9 10h6v6H9zM14 16h5v8h-5z" fill="#bcc4f4" /><path d="M15 10h6v14h-6" fill="none" stroke="#222" strokeWidth="2" />
        </Property>
        <Property w={103} name="图层" value="无" />
        <svg width="36" height="34" viewBox="0 0 36 34">
          <path d="M0 12h14M0 17h16M0 22h20M0 27h18" stroke="#1414ff" strokeWidth="2" /><path d="M0 14h14M0 19h16M0 24h20" stroke={C} strokeWidth="2" />
          <path d="M10 14l9-6 11 8-8 12z" fill="#fff06a" stroke="#111" strokeWidth="2" /><path d="M12 14l12 11M16 11l12 9" stroke="#111" strokeWidth="1.5" /><path d="M26 10l6-8" stroke={N} strokeWidth="6" />
        </svg>
        <svg width="36" height="34" viewBox="0 0 36 34">
          <defs><linearGradient id="ball" x2="0" y2="1"><stop offset="0" stopColor="#ffe31c" /><stop offset="0.6" stopColor="#ffa030" /><stop offset="1" stopColor="#c414f0" /></linearGradient></defs>
          <circle cx="12" cy="21" r="9" fill="url(#ball)" /><path d="M21 9l9 11" stroke={N} strokeWidth="5" /><path d="M21 9l8 10" stroke="#39f" strokeWidth="2" /><path d="M17 6l3-3M21 4l7-3M25 8l3-3" stroke="#c47a30" strokeWidth="2" strokeDasharray="2 1" />
        </svg>
      </PropertyBar>
      <Main>
        <ScrollStrip>
          <ScrollButton type="button" aria-label="向上滚动"><svg width="18" height="17"><path d="M0 17L9 0l9 17z" /></svg></ScrollButton>
          <ScrollButton type="button" aria-label="向下滚动"><svg width="18" height="17"><path d="M0 0l9 17L18 0z" /></svg></ScrollButton>
        </ScrollStrip>
        <Viewport>
          <Sketch />
          <SpecificationTree />
          <SketchPalette>
            <PaletteTitle>
              <PaletteName>草图工具</PaletteName>
              <CloseButton type="button" aria-label="关闭草图工具">x</CloseButton>
            </PaletteTitle>
            <HBar>
              <Tools first items={[["grid", "网格"], ["snap", "点捕捉"]]} />
              <Divider />
              <Tools grip={false} items={[["construct", "构造元素"], ["geoCon", "几何约束"], ["dimCon", "尺寸约束"]]} />
              <Divider />
            </HBar>
          </SketchPalette>
          <OperationPalette>
            <PaletteTitle>
              <PaletteName>操作</PaletteName>
              <CloseButton type="button" aria-label="关闭操作">x</CloseButton>
            </PaletteTitle>
            <OperationTools>
              <Tools vertical items={[["corner", "圆角"], ["chamfer", "倒角", 0, 41], ["trim", "修剪", 1], ["mirror", "镜像", 1], ["project", "投影三维元素", 1, 42]]} />
            </OperationTools>
          </OperationPalette>
          <Note>
            草图绘制，通过这些命令，进行线段，构造线，圆角等的绘制，
            <br />
            并进行尺寸约束
          </Note>
        </Viewport>
        <SideBar>
          <Tools vertical first items={[["sketcher", "草图编辑器", 0, 48], ["exit", "退出工作台"]]} />
          <Tools vertical items={[["gray1", "新建几何图形集"], ["gray2", "更新"], ["gray3", "剖切"], ["gray4", "过滤"]]} />
          <Tools vertical items={[["select", "选择", 1, 50]]} />
          <Tools vertical items={[["conOff", "对话框约束"], ["constraint", "约束", 1], ["clip", "固联", 1], ["animate", "动画约束"], ["edit", "编辑多重约束"]]} />
          <Tools vertical items={[["profile", "轮廓"], ["rect", "矩形", 1], ["circle", "圆", 1], ["spline", "样条线", 1], ["ellipse", "椭圆", 1], ["line", "直线", 1], ["axis", "轴"], ["point", "点", 1]]} />
        </SideBar>
      </Main>
      <BottomBar>
        <Tools first items={[["newDoc", "新建"], ["open", "打开"], ["save", "保存"], ["print", "打印"], ["cut", "剪切"], ["copy", "复制"], ["paste", "粘贴"], ["undo", "撤销", 1], ["redo", "重做", 1], ["help", "这是什么"]]} />
        <Tools items={[["fx", "公式"], ["note", "注释"], ["link", "链接", 0, 34], ["table", "设计表", 1], ["relations", "关系"], ["lock", "锁定", 1], ["equation", "等效尺寸"]]} />
        <Tools items={[["fly", "飞行模式"], ["fit", "全部适应"], ["pan", "平移"], ["rotate", "旋转"], ["zoomIn", "放大"], ["zoomOut", "缩小"], ["normal", "法线视图"], ["multi", "多视图"], ["cube", "等轴测视图", 1], ["cylinder", "着色", 2], ["hideShow", "隐藏/显示"], ["swap", "交换可视空间"]]} />
        <Tools items={[["axisOff", "断开"], ["tree1", "结构树"], ["tree2", "插入对象"], ["tree3", "插入元素"], ["signal", "状态", 1]]} />
        <Tools items={[["measure", "测量间距"], ["calliper", "测量项"]]} />
        <Tools items={[["draft", "拔模分析"]]} />
        <Divider />
        <Tools grip={false} items={[["section", "剖切零件", 2], ["block", "零件块", 1]]} />
        <Divider />
        <Tools grip={false} items={[["oDiam", "诊断"], ["oText", "尺寸显示"], ["oHatch", "约束显示"]]} />
        <Logo width="64" height="48" viewBox="0 0 64 48" overflow="visible" role="img" aria-label="DS CATIA">
          <path d="M16 2c8-3 17-1 12 5-3 4-7 5-10 6 5-3 9-6 9-9-2-3-6-2-11-2z" fill="#e3222c" />
          <text x="2" y="35" fontFamily="Open Sans" fontStyle="italic" fontSize="25" fontWeight="600" fill="#432f8c">D</text>
          <text x="22" y="31" fontFamily="Open Sans" fontStyle="italic" fontSize="25" fontWeight="600" fill="#f0a010">S</text>
          <text x="14" y="46" fontFamily="Open Sans" fontStyle="italic" fontSize="15" fontWeight="800" fill="#432f8c">CATIA</text>
        </Logo>
      </BottomBar>
      <StatusBar>
        <StatusField $w="78%" />
        <StatusField $w="18%" $white />
        <StatusField $w="2%" />
      </StatusBar>
      <Markup viewBox="0 0 2560 1337">
        <g fill="none" stroke={RED} strokeWidth="3">
          <path d="M2258 887H2382V951H2258z" />
          <path d="M2481 551H2558V619H2481z" />
          <path d="M2483 962H2556V1082H2483z" />
        </g>
        <PointerArrow tip={[1585, 507]} tail={[2463, 598]} />
        <PointerArrow tip={[1499, 613]} tail={[2239, 886]} />
        <PointerArrow tip={[1372, 703]} tail={[2468, 1050]} />
      </Markup>
    </Window>
  );
}
